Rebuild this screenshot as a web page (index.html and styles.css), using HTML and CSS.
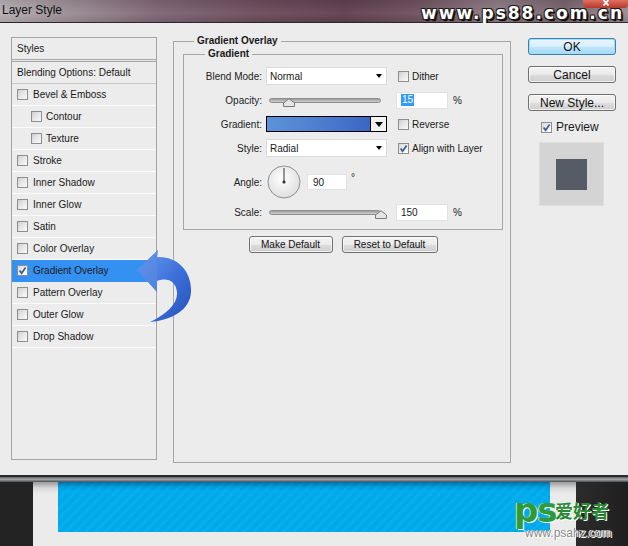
FILE: index.html
```html
<!DOCTYPE html>
<html lang="en">
<head>
<meta charset="utf-8">
<title>Layer Style</title>
<link rel="stylesheet" href="styles.css">
</head>
<body>
<div class="window">
  <header class="titlebar">
    <span class="title">Layer Style</span>
    <span class="close"><svg viewBox="0 0 8 6"><path d="M1.5 0 L6.5 5.5 M6.5 0 L1.5 5.5"/></svg></span>
    <span class="watermark">www.ps88.com.cn</span>
  </header>

  <main class="dialog">
    <nav class="styles-list">
      <div class="list-head">Styles</div>
      <div class="list-blend">Blending Options: Default</div>
      <div class="item"><span class="cb"></span>Bevel &amp; Emboss</div>
      <div class="item sub"><span class="cb"></span>Contour</div>
      <div class="item sub"><span class="cb"></span>Texture</div>
      <div class="item"><span class="cb"></span>Stroke</div>
      <div class="item"><span class="cb"></span>Inner Shadow</div>
      <div class="item"><span class="cb"></span>Inner Glow</div>
      <div class="item"><span class="cb"></span>Satin</div>
      <div class="item"><span class="cb"></span>Color Overlay</div>
      <div class="item active"><span class="cb on"><svg viewBox="0 0 9 9"><path d="M1.6 4.4 L3.6 7.2 L7.6 1.4"/></svg></span>Gradient Overlay</div>
      <div class="item"><span class="cb"></span>Pattern Overlay</div>
      <div class="item"><span class="cb"></span>Outer Glow</div>
      <div class="item"><span class="cb"></span>Drop Shadow</div>
    </nav>

    <section class="settings">
      <fieldset class="group outer">
        <legend>Gradient Overlay</legend>
        <fieldset class="group inner">
          <legend>Gradient</legend>
          <div class="form">
            <span class="label">Blend Mode:</span>
            <div class="select"><span>Normal</span><i class="caret"></i></div>
            <div class="extra"><span class="cb"></span><span class="cb-text">Dither</span></div>

            <span class="label">Opacity:</span>
            <div class="slider"><div class="track"><svg class="thumb" style="left:13px" viewBox="0 0 12 9"><path d="M0.5 8.5 L0.5 5 L6 0.8 L11.5 5 L11.5 8.5 Z"/></svg></div></div>
            <div class="extra"><span class="field"><span class="sel">15</span></span><span class="unit">%</span></div>

            <span class="label">Gradient:</span>
            <div class="swatch"><span class="swatch-fill"></span><span class="swatch-btn"><i class="caret big"></i></span></div>
            <div class="extra"><span class="cb"></span><span class="cb-text">Reverse</span></div>

            <span class="label">Style:</span>
            <div class="select"><span>Radial</span><i class="caret"></i></div>
            <div class="extra"><span class="cb on"><svg viewBox="0 0 9 9"><path d="M1.6 4.4 L3.6 7.2 L7.6 1.4"/></svg></span><span class="cb-text">Align with Layer</span></div>

            <span class="label">Angle:</span>
            <div class="angle">
              <svg class="dial" viewBox="0 0 34 34">
                <defs>
                  <radialGradient id="dialg" cx="45%" cy="40%" r="65%">
                    <stop offset="0" stop-color="#ffffff"/>
                    <stop offset="1" stop-color="#dcdcdc"/>
                  </radialGradient>
                </defs>
                <circle cx="17" cy="17" r="16" fill="url(#dialg)" stroke="#8f8f8f" stroke-width="1"/>
                <line x1="17" y1="17" x2="17" y2="3" stroke="#333" stroke-width="1"/>
                <circle cx="17" cy="17" r="1.6" fill="#333"/>
              </svg>
              <span class="field small">90</span>
              <span class="deg">°</span>
            </div>
            <span></span>

            <span class="label">Scale:</span>
            <div class="slider"><div class="track"><svg class="thumb" style="left:105px" viewBox="0 0 12 9"><path d="M0.5 8.5 L0.5 5 L6 0.8 L11.5 5 L11.5 8.5 Z"/></svg></div></div>
            <div class="extra"><span class="field">150</span><span class="unit">%</span></div>
          </div>
        </fieldset>
        <div class="defaults">
          <button class="btn make">Make Default</button>
          <button class="btn reset">Reset to Default</button>
        </div>
      </fieldset>
    </section>

    <aside class="actions">
      <button class="btn big ok">OK</button>
      <button class="btn big">Cancel</button>
      <button class="btn big">New Style...</button>
      <div class="preview-row"><span class="cb on"><svg viewBox="0 0 9 9"><path d="M1.6 4.4 L3.6 7.2 L7.6 1.4"/></svg></span><span>Preview</span></div>
      <div class="preview"><span class="preview-square"></span></div>
    </aside>

    <svg class="arrow" viewBox="0 0 60 78">
      <defs>
        <linearGradient id="arrowg" x1="0" y1="0" x2="1" y2="1">
          <stop offset="0" stop-color="#6c9ded"/>
          <stop offset="0.55" stop-color="#3b6fd8"/>
          <stop offset="1" stop-color="#2550bb"/>
        </linearGradient>
      </defs>
      <path d="M3,22 L24,2 L23,9 C45,8 58,25 57,44 C56,62 38,72 16,74 C32,66 44,56 43,44 C42,33 33,29 23,33 L23,44 Z" fill="url(#arrowg)"/>
      <path d="M3,22 L24,2 L23,9 L23,33 L23,44 Z" fill="#5a8ce4" opacity="0.6"/>
    </svg>
  </main>

  <footer class="footer">
    <div class="strip"></div>
    <div class="scene">
      <div class="side-dark"></div>
      <div class="canvas"><div class="banner"></div></div>
      <div class="side-dark right"></div>
      <div class="logo">
        <span class="logo-ps">ps</span>
        <span class="logo-cn">爱好者</span>
        <span class="logo-url">www.psahz.com</span>
      </div>
    </div>
  </footer>
</div>
</body>
</html>
```

FILE: styles.css
```css
* { box-sizing: border-box; }

html, body {
  margin: 0;
  padding: 0;
}

body {
  width: 628px;
  height: 546px;
  overflow: hidden;
  background: #ececec;
  font-family: "Liberation Sans", Arial, sans-serif;
  font-size: 10px;
  color: #1a1a1a;
}

.window {
  display: flex;
  flex-direction: column;
  height: 546px;
}

/* ---------- title bar ---------- */
.titlebar {
  position: relative;
  flex: none;
  height: 23px;
  display: flex;
  align-items: center;
  padding-left: 2px;
  border-bottom: 1px solid #2c2729;
  background:
    linear-gradient(180deg, rgba(0,0,0,0.08), rgba(255,255,255,0.05) 60%, rgba(0,0,0,0.08)),
    linear-gradient(90deg, #b7afb3 0, #9d8f96 10%, #7e6574 25%, #6a4a5a 42%, #603f50 55%, #6d4f5d 66%, #8d7b84 79%, #77626c 90%, #9b8d93 100%);
}

.title {
  font-size: 12px;
  color: #111;
  line-height: 20px;
  margin-top: -2px;
}

.close {
  position: absolute;
  right: 0;
  top: 0;
  width: 45px;
  height: 8px;
  display: flex;
  justify-content: center;
  border-radius: 0 0 4px 4px;
  background: linear-gradient(#e07060, #b5382a);
}

.close svg {
  width: 8px;
  height: 6px;
  fill: none;
  stroke: #fff;
  stroke-width: 1.8;
}

.watermark {
  position: absolute;
  right: 4px;
  top: 5px;
  font-family: "DejaVu Sans", sans-serif;
  font-weight: bold;
  font-size: 17px;
  line-height: 17px;
  letter-spacing: 2px;
  color: #fff;
  text-shadow: 1px 1px 0 #1e1e1e, -1px -1px 0 #1e1e1e, 1px -1px 0 #1e1e1e, -1px 1px 0 #1e1e1e, 2px 2px 1px #000;
}

/* ---------- dialog ---------- */
.dialog {
  position: relative;
  flex: none;
  height: 452px;
  display: flex;
  align-items: flex-start;
  padding: 12px 0 0 11px;
  background: #ececec;
}

/* styles list */
.styles-list {
  flex: none;
  width: 146px;
  height: 423px;
  margin-top: 2px;
  border: 1px solid #a4a4a4;
  display: flex;
  flex-direction: column;
}

.list-head {
  height: 24px;
  line-height: 21px;
  padding-left: 5px;
  border-bottom: 3px double #a4a4a4;
}

.list-blend {
  height: 22px;
  line-height: 21px;
  padding-left: 5px;
  border-bottom: 1px solid #c6c6c6;
}

.item {
  height: 22px;
  display: flex;
  align-items: center;
  gap: 5px;
  padding-left: 5px;
  border-bottom: 1px solid #fbfbfb;
}

.item.sub {
  padding-left: 19px;
  gap: 4px;
}

.item.active {
  background: #3591f1;
  border-bottom-color: #3591f1;
}

/* checkbox */
.cb {
  flex: none;
  display: inline-flex;
  align-items: center;
  justify-content: center;
  width: 11px;
  height: 11px;
  border: 1px solid #8d8e8e;
  background: linear-gradient(135deg, #cdcdcd 0%, #e6e6e6 45%, #fafafa 100%);
}

.cb.on {
  background: linear-gradient(135deg, #d7d7d7 0%, #f2f2f2 60%, #ffffff 100%);
}

.cb svg {
  width: 9px;
  height: 9px;
  fill: none;
  stroke: #3b5a9c;
  stroke-width: 1.7;
}

/* settings */
.settings {
  flex: none;
  width: 338px;
  margin-left: 16px;
}

fieldset.group {
  margin: 0;
  min-width: 0;
  border: 1px solid #a6a6a6;
}

fieldset.group > legend {
  font-weight: bold;
  padding: 0 3px;
}

.outer {
  height: 428px;
  padding: 0 7px 0 9px;
}

.outer > legend {
  margin-left: 11px;
  line-height: 12px;
}

.inner {
  height: 183px;
  padding: 3px 0 0 0;
}

.inner > legend {
  margin-left: 21px;
  line-height: 14px;
}

.form {
  display: grid;
  grid-template-columns: 78px 121px 1fr;
  grid-template-rows: 24px 24px 24px 24px 44px 16px;
  column-gap: 4px;
  align-items: center;
}

.label {
  text-align: right;
  color: #222;
}

.extra {
  display: flex;
  align-items: center;
  padding-left: 5px;
}

.extra .cb {
  margin-left: 2px;
}

.cb-text {
  margin-left: 3px;
}

.select {
  height: 18px;
  display: flex;
  align-items: center;
  justify-content: space-between;
  padding: 0 4px 0 3px;
  background: #fff;
  border: 1px solid #dadada;
}

.caret {
  width: 0;
  height: 0;
  border-left: 3px solid transparent;
  border-right: 3px solid transparent;
  border-top: 4px solid #000;
}

.caret.big {
  border-left-width: 4px;
  border-right-width: 4px;
  border-top-width: 5px;
}

.slider {
  height: 17px;
  display: flex;
  align-items: center;
  padding: 0 6px 0 3px;
}

.track {
  position: relative;
  flex: 1;
  height: 5px;
  border: 1px solid #8e8e8e;
  border-radius: 3px;
  background: linear-gradient(#9c9c9c, #cfcfcf);
}

.thumb {
  position: absolute;
  top: -1px;
  width: 12px;
  height: 9px;
  fill: #e6e6e6;
  stroke: #7a7a7a;
  stroke-width: 1;
}

.field {
  display: flex;
  align-items: center;
  width: 52px;
  height: 17px;
  padding-left: 4px;
  background: #fff;
  border: 1px solid #e2e2e2;
}

.field.small {
  width: 40px;
  height: 16px;
  padding-left: 5px;
}

.sel {
  background: #3399ff;
  color: #fff;
  padding: 0 1px;
  line-height: 12px;
}

.unit {
  margin-left: 5px;
}

.swatch {
  height: 16px;
  display: flex;
  border: 1px solid #000;
}

.swatch-fill {
  flex: 1;
  background: linear-gradient(90deg, #5d92da, #4a7ccf 55%, #3c66c2);
}

.swatch-btn {
  width: 16px;
  display: flex;
  align-items: center;
  justify-content: center;
  border-left: 1px solid #000;
  background: #f2f2f2;
}

.angle {
  display: flex;
  align-items: center;
  padding-left: 1px;
}

.dial {
  width: 34px;
  height: 34px;
}

.angle .field {
  margin-left: 6px;
}

.deg {
  margin-left: 4px;
  margin-bottom: 10px;
}

.defaults {
  display: flex;
  justify-content: center;
  gap: 9px;
  margin-top: 6px;
}

.btn {
  height: 17px;
  padding: 0;
  font-family: "Liberation Sans", Arial, sans-serif;
  font-size: 10px;
  color: #111;
  border: 1px solid #707070;
  border-radius: 3px;
  background: linear-gradient(#f3f3f3 0%, #ebebeb 50%, #dddddd 51%, #cfcfcf 100%);
  box-shadow: inset 0 0 0 1px rgba(255,255,255,0.7);
}

.btn.make { width: 84px; }
.btn.reset { width: 96px; }

/* actions */
.actions {
  flex: none;
  width: 88px;
  margin-left: 17px;
  margin-top: 3px;
  display: flex;
  flex-direction: column;
}

.btn.big {
  height: 17px;
  margin-bottom: 11px;
  font-size: 12px;
  line-height: 14px;
}

.btn.ok {
  border-color: #3c7fb1;
  background: linear-gradient(#eaf6fd 0%, #d9f0fc 50%, #bee6fd 51%, #a7d9f5 100%);
  box-shadow: inset 0 0 0 1px #9fe0f8;
}

.preview-row {
  display: flex;
  align-items: center;
  gap: 4px;
  height: 12px;
  margin-top: -1px;
  padding-left: 13px;
  font-size: 12px;
}

.preview {
  width: 65px;
  height: 64px;
  margin: 9px 0 0 11px;
  display: flex;
  align-items: center;
  justify-content: center;
  background: #d4d4d4;
  border: 1px solid #dedede;
}

.preview-square {
  width: 31px;
  height: 31px;
  background: #555c66;
}

.arrow {
  position: absolute;
  left: 134px;
  top: 225px;
  width: 60px;
  height: 78px;
}

/* ---------- footer scene ---------- */
.footer {
  flex: none;
  height: 71px;
  border-top: 2px solid #2a2a2a;
  display: flex;
  flex-direction: column;
}

.strip {
  height: 5px;
  background: linear-gradient(#5d6064, #a4a6a8 45%, #7c7f83 70%, #4c4f53);
}

.scene {
  position: relative;
  flex: 1;
  display: flex;
}

.side-dark {
  width: 33px;
  background: #232323;
}

.side-dark.right {
  width: 52px;
  background: linear-gradient(90deg, #2c2c2c, #1f1f1f);
}

.canvas {
  flex: 1;
  padding-left: 25px;
  background:
    linear-gradient(180deg, rgba(0,0,0,0.35) 0, rgba(0,0,0,0.08) 6px, rgba(0,0,0,0) 12px),
    #ebebeb;
}

.banner {
  width: 492px;
  height: 50px;
  background:
    linear-gradient(180deg, rgba(0,40,80,0.45) 0, rgba(0,40,80,0.1) 5px, rgba(0,0,0,0) 9px),
    repeating-linear-gradient(135deg, #00a9ea 0, #00a9ea 4px, #07aeee 4px, #07aeee 7px);
}

.logo {
  position: absolute;
  left: 514px;
  top: 14px;
  width: 110px;
  height: 48px;
}

.logo-ps {
  position: absolute;
  left: 0;
  top: 0;
  font-family: "DejaVu Sans", sans-serif;
  font-weight: bold;
  font-size: 34px;
  line-height: 28px;
  letter-spacing: -1px;
  color: #2f9a3b;
  text-shadow: 1px 1px 0 #fff, -1px 0 0 #cfe8d0;
}

.logo-cn {
  position: absolute;
  left: 41px;
  top: 4px;
  font-family: "Noto Sans CJK SC", sans-serif;
  font-weight: bold;
  font-size: 18px;
  line-height: 20px;
  color: #2a8a35;
  text-shadow: 1px 1px 0 #fff;
}

.logo-url {
  position: absolute;
  left: 11px;
  top: 31px;
  font-family: "Liberation Sans", Arial, sans-serif;
  font-size: 12px;
  line-height: 13px;
  color: #8a8a8a;
  text-shadow: 1px 1px 0 #fff, -1px 0 0 #fff;
}
```
